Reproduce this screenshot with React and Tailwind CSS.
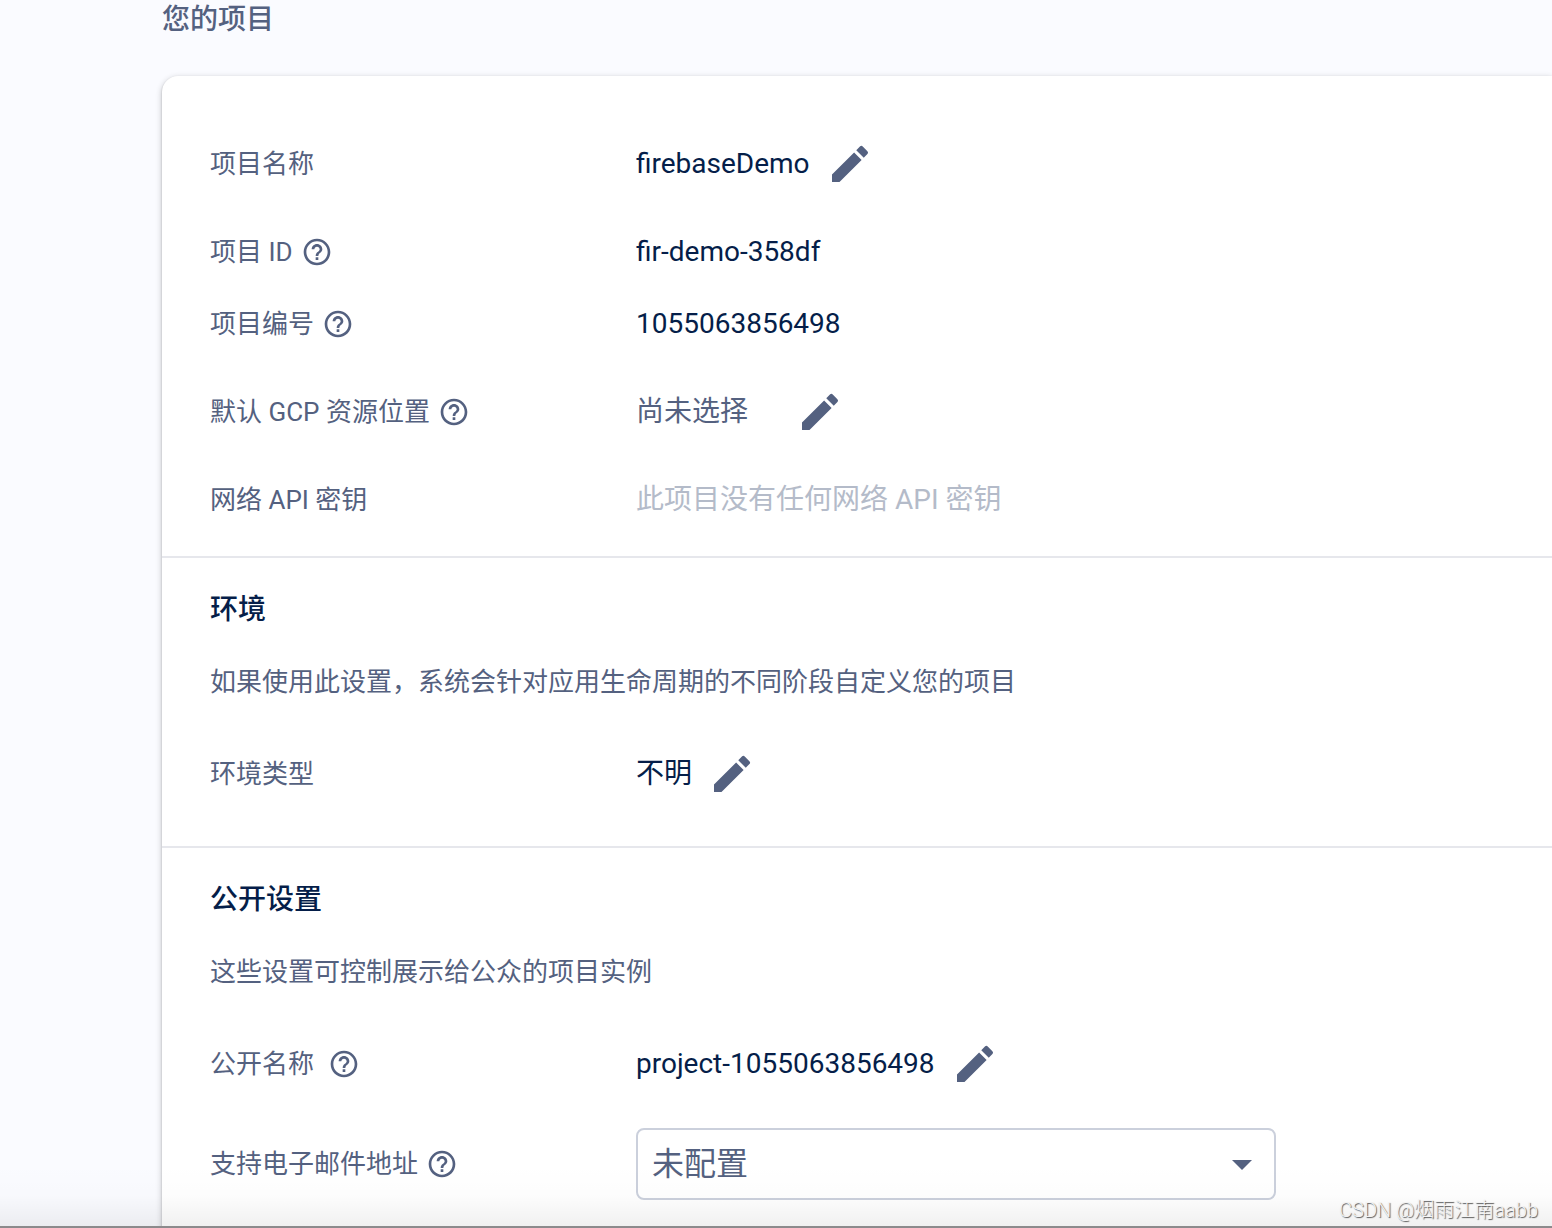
import { useId, useState } from "react";
import { MdArrowDropDown, MdEdit, MdHelpOutline } from "react-icons/md";

const EditButton = ({ label, className = "ml-4" }) => (
    <button type="button" aria-label={label} className={`${className} shrink-0 text-[#546180]`}>
        <MdEdit className="size-12" />
    </button>
);

const HelpButton = ({ label, className = "ml-2" }) => (
    <button type="button" aria-label={label} className={`${className} shrink-0`}>
        <MdHelpOutline className="size-8" />
    </button>
);

const Row = ({ label, htmlFor, help, helpClass, height = "h-18", children }) => (
    <div className={`${height} grid grid-cols-[426px_1fr] items-center`}>
        <div className="flex items-center text-[26px] text-[#546180]">
            {htmlFor ? <label htmlFor={htmlFor}>{label}</label> : <span>{label}</span>}
            {help && <HelpButton label={help} className={helpClass} />}
        </div>
        <div className="flex items-center text-[28px] text-[#051e49]">{children}</div>
    </div>
);

const SectionIntro = ({ title, children }) => (
    <>
        <h3 className="text-[28px] leading-10 font-medium text-[#051e49]">{title}</h3>
        <p className="my-8 mb-5 text-[26px] leading-10 text-[#546180]">{children}</p>
    </>
);

const EmailSelect = ({ id }) => {
    const [email, setEmail] = useState("");

    return (
        <div className="relative w-full max-w-[640px]">
            <select
                id={id}
                value={email}
                onChange={(e) => setEmail(e.target.value)}
                className="h-18 w-full appearance-none rounded-lg border-2 border-[#cbd0dc] bg-transparent px-3.5 text-[32px] text-[#546180]"
            >
                <option value="">未配置</option>
            </select>
            <MdArrowDropDown className="pointer-events-none absolute top-3 right-2.5 size-12 text-[#546180]" />
        </div>
    );
};

const App = () => {
    const emailId = useId();

    return (
        <div
            lang="zh-CN"
            className="relative flex h-screen flex-col overflow-hidden bg-[#fafbff] font-[Roboto,'Noto_Sans_CJK_SC',sans-serif] leading-10 font-normal"
        >
            <main className="min-h-0 flex-1 overflow-hidden pl-[162px]">
                <h2 className="mb-9 text-[28px] leading-10 font-medium text-[#546180]">您的项目</h2>

                <div className="rounded-l-2xl bg-white pb-12 shadow-[0_2px_6px_rgba(0,0,0,0.24),0_1px_2px_rgba(0,0,0,0.2)]">
                    <section className="border-b-2 border-[#e6e7ec] px-12 pt-9 pb-5">
                        <Row label="项目名称" height="h-26">
                            <span>firebaseDemo</span>
                            <EditButton label="修改项目名称" />
                        </Row>
                        <Row label="项目 ID" help="项目 ID 说明">
                            <span>fir-demo-358df</span>
                        </Row>
                        <Row label="项目编号" help="项目编号说明">
                            <span>1055063856498</span>
                        </Row>
                        <Row label="默认 GCP 资源位置" help="资源位置说明" height="h-26">
                            <span className="text-[#546180]">尚未选择</span>
                            <EditButton label="修改资源位置" className="ml-12" />
                        </Row>
                        <Row label="网络 API 密钥">
                            <span className="text-[#b4bbc9]">此项目没有任何网络 API 密钥</span>
                        </Row>
                    </section>

                    <section className="border-b-2 border-[#e6e7ec] px-12 pt-8 pb-5">
                        <SectionIntro title="环境">
                            如果使用此设置，系统会针对应用生命周期的不同阶段自定义您的项目
                        </SectionIntro>
                        <Row label="环境类型" height="h-26">
                            <span>不明</span>
                            <EditButton label="修改环境类型" />
                        </Row>
                    </section>

                    <section className="px-12 pt-8">
                        <SectionIntro title="公开设置">这些设置可控制展示给公众的项目实例</SectionIntro>
                        <Row label="公开名称" help="公开名称说明" helpClass="ml-3.5" height="h-26">
                            <span>project-1055063856498</span>
                            <EditButton label="修改公开名称" />
                        </Row>
                        <Row label="支持电子邮件地址" htmlFor={emailId} help="支持电子邮件地址说明" height="h-24">
                            <EmailSelect id={emailId} />
                        </Row>
                    </section>
                </div>
            </main>

            {/* fade above the bottom edge */}
            <div className="pointer-events-none absolute inset-x-0 bottom-0 h-16 bg-linear-to-b from-transparent via-black/1 to-black/6" />
            <div className="h-0.5 bg-[#959395]" />

            <span className="absolute right-3.5 bottom-1 font-[Roboto,'Noto_Sans_CJK_SC',sans-serif] text-[20px] leading-7 font-light text-[#f4f4f4] [text-shadow:1px_1px_1px_#555]">
                CSDN @烟雨江南aabb
            </span>
        </div>
    );
};

export default App;
